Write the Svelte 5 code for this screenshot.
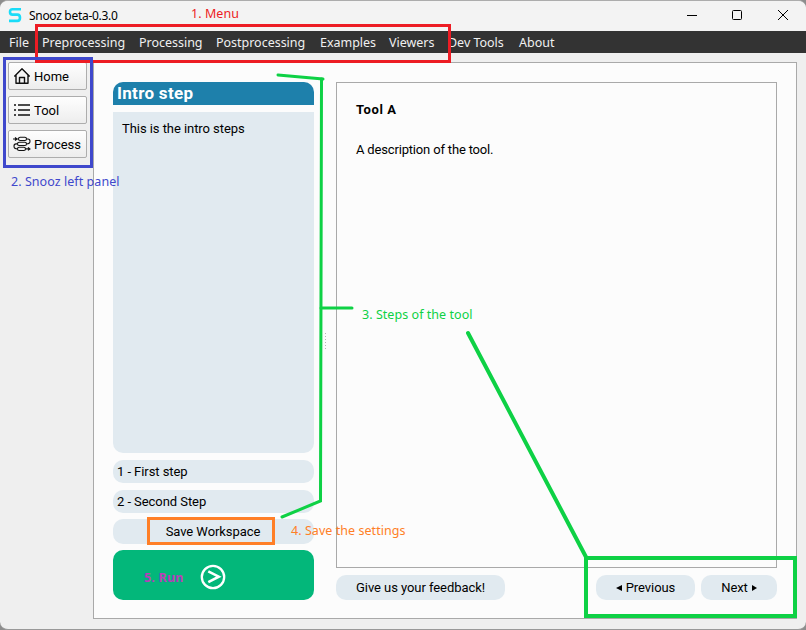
<script>
  const menus = [
    ['File', 19], ['Preprocessing', 83], ['Processing', 63], ['Postprocessing', 90],
    ['Examples', 55], ['Viewers', 45], ['Dev Tools', 57], ['About', 35]
  ];
  const steps = ['1 - First step', '2 - Second Step'];
</script>

<div class="window">
  <header class="titlebar">
    <svg class="logo" width="14" height="16" viewBox="0 0 14 16"><path d="M13 2.3H4.5Q2 2.3 2 4.9Q2 7.6 4.5 7.6H9.5Q12 7.6 12 10.8Q12 13.9 9.5 13.9H1" fill="none" stroke="#1adcf8" stroke-width="2.6" /></svg>
    <span class="title">Snooz beta-0.3.0</span>
    <svg class="controls" width="106" height="14" viewBox="0 0 106 14" fill="none" stroke="#000">
      <path d="M0 7.5H10" />
      <rect x="45.5" y="2.5" width="9" height="9" rx="1" />
      <path d="M91 2L101 12M101 2L91 12" />
    </svg>
  </header>
  <nav>
    {#each menus as [label, w]}
      <span class="menu" style="width:{w}px">{label}</span>
    {/each}
  </nav>
  <div class="body">
    <aside>
      <button>
        <svg width="18" height="18" viewBox="0 0 18 18" fill="none" stroke="#111" stroke-width="1.4" stroke-linejoin="round"><path d="M1.3 9.5L9 1.8L16.7 9.5M3 8V16.3H15V8M6.5 16V10.5H11.5V16" /></svg>
        <span>Home</span>
      </button>
      <button>
        <svg width="18" height="18" viewBox="0 0 18 18" fill="none" stroke="#111" stroke-width="1.6"><path d="M1 4H3M1 9H3M1 14H3M5 4H17M5 9H17M5 14H17" /></svg>
        <span>Tool</span>
      </button>
      <button>
        <svg width="18" height="18" viewBox="0 0 18 18" fill="none" stroke="#111" stroke-width="1.1"><rect x="5.5" y="2.3" width="8" height="3.2" rx="1.6" /><rect x="4.5" y="7.3" width="9" height="3.2" rx="1.6" /><rect x="4.5" y="12.3" width="8" height="3.2" rx="1.6" /><path d="M0 4H5.5M13.5 4H15Q17 4 17 6.2Q17 8.9 13.5 8.9M4.5 8.9H3Q1 8.9 1 11.2Q1 13.9 4.5 13.9M12.5 13.9H17M2 2.5L4 4L2 5.5M15 12.4L17 13.9L15 15.4" /></svg>
        <span>Process</span>
      </button>
    </aside>
    <main>
      <section class="steps">
        <h2>Intro step</h2>
        <div class="intro">This is the intro steps</div>
        {#each steps as step}
          <div class="step">{step}</div>
        {/each}
        <div class="save">Save Workspace</div>
        <div class="run">
          <svg width="26" height="26" viewBox="0 0 26 26" fill="none" stroke="#fff"><circle cx="13" cy="13" r="11.2" stroke-width="2.3" /><path d="M8.3 7.3L18.8 12.7L8.3 18.2" stroke-width="2.6" /></svg>
        </div>
      </section>
      <div class="splitter"><i></i></div>
      <section class="content">
        <article>
          <h3>Tool A</h3>
          <p>A description of the tool.</p>
        </article>
        <footer>
          <div class="pill feedback">Give us your feedback!</div>
          <div class="pill prev"><svg width="6" height="6" viewBox="0 0 6 6"><path d="M6 0V6L0 3Z" /></svg><span>Previous</span></div>
          <div class="pill next"><span>Next</span><svg width="5" height="6" viewBox="0 0 5 6"><path d="M0 0V6L5 3Z" /></svg></div>
        </footer>
      </section>
    </main>
  </div>

  <svg class="notes" width="806" height="630" viewBox="0 0 806 630" fill="none">
    <rect x="36.5" y="25.5" width="413" height="36" stroke="#ed1c24" stroke-width="3" />
    <rect x="4.5" y="58.5" width="87" height="108" stroke="#3f48cc" stroke-width="3" />
    <rect x="148.5" y="518.5" width="125" height="25" stroke="#ff7f27" stroke-width="3" />
    <g stroke="#0ed145" stroke-linecap="round">
      <path d="M278 75L323 79" stroke-width="3" />
      <path d="M321.5 79L320.5 501L282 517" stroke-width="3" />
      <path d="M321 308H352" stroke-width="3" />
      <path d="M468 333L586 557" stroke-width="4" />
      <rect x="586" y="558" width="209" height="58" stroke-width="4" stroke-linecap="butt" />
    </g>
    <g class="labels">
      <text x="191" y="18" fill="#ed1c24" textLength="48">1. Menu</text>
      <text x="11" y="186" fill="#3f48cc" textLength="108.5">2. Snooz left panel</text>
      <text x="362" y="319" fill="#0ed145" textLength="110.5">3. Steps of the tool</text>
      <text x="291" y="535" fill="#ff7f27" textLength="114.5">4. Save the settings</text>
      <text x="144" y="582" fill="#b83dba" font-weight="700" textLength="39.5">5. Run</text>
    </g>
  </svg>
</div>

<style>
  :global(body) { background: #8d8d8d; }
  .window {
    position: relative; box-sizing: border-box; width: 806px; height: 630px;
    display: flex; flex-direction: column; overflow: hidden;
    background: #efefef; border-top: 1px solid #acacac; border-bottom: 1px solid #999;
    border-radius: 8px; font: 13px Roboto, sans-serif; letter-spacing: -0.06px; color: #000;
  }
  .titlebar { height: 30px; flex: none; display: flex; align-items: center; background: #f3f3f3; padding-left: 8px; }
  .logo { margin-top: -2px; }
  .title { font: 12px 'Noto Sans', sans-serif; letter-spacing: -0.3px; margin-left: 7px; margin-top: -1px; white-space: nowrap; }
  .controls { margin-left: auto; margin-right: 13px; margin-top: -2px; }
  nav { height: 22px; flex: none; background: #333; display: flex; align-items: center; gap: 14px; padding-left: 9px; }
  .menu { color: #f0f0f0; font: 12.5px 'Noto Sans', sans-serif; letter-spacing: -0.02px; white-space: nowrap; flex: none; }
  .body { flex: 1; display: flex; padding: 9px 9px 10px 8px; min-height: 0; }
  aside { width: 79px; margin-right: 6px; display: flex; flex-direction: column; gap: 6px; flex: none; }
  button {
    box-sizing: border-box; height: 28px; width: 79px; padding: 0 0 0 4px; margin: 0; display: flex; align-items: center; gap: 3px;
    font: 13px Roboto, sans-serif; color: #000; border: 1px solid #adadad; border-radius: 2px;
    background: linear-gradient(#fefefe, #ededed);
  }
  main { flex: 1; box-sizing: border-box; border: 1px solid #a9a9a9; background: #fcfcfc; display: flex; padding: 19px 19px 18px; min-width: 0; }
  .steps { width: 201px; flex: none; display: flex; flex-direction: column; }
  h2 { margin: 0 0 7px; height: 23px; background: #1e80ab; color: #fff; border-radius: 10px 10px 0 0; font: 700 17px/23px Roboto, sans-serif; letter-spacing: 0.3px; padding-left: 4px; }
  .intro { box-sizing: border-box; height: 341px; background: #e1eaf0; border-radius: 0 0 10px 10px; padding: 9px; line-height: 16px; margin-bottom: 7px; }
  .step { height: 23px; line-height: 23px; background: #e1eaf0; border-radius: 10px; padding-left: 4px; margin-bottom: 7px; }
  .save { height: 25px; line-height: 26px; background: #e1eaf0; border-radius: 10px; margin: -1px 0 6px; padding-right: 1px; text-align: center; }
  .run { height: 50px; background: #03b77a; border-radius: 10px; display: flex; align-items: center; justify-content: center; }
  .run svg { margin: 3px 1px 0 0; }
  .splitter { width: 22px; flex: none; display: flex; align-items: center; justify-content: center; }
  .splitter i { width: 1px; height: 17px; background: repeating-linear-gradient(#b5b5b5 0 1px, transparent 1px 3px); }
  .content { flex: 1; display: flex; flex-direction: column; min-width: 0; }
  article { box-sizing: border-box; height: 486px; flex: none; border: 1px solid #a9a9a9; padding: 19px; }
  h3 { margin: 0; font: 700 13px/16px Roboto, sans-serif; letter-spacing: 0.6px; }
  p { margin: 24px 0 0; line-height: 16px; letter-spacing: -0.17px; }
  footer { display: flex; margin-top: 7px; }
  .pill { height: 25px; display: flex; align-items: center; justify-content: center; background: #e1eaf0; border-radius: 10px; white-space: nowrap; gap: 4px; }
  .feedback { width: 169px; margin-right: auto; }
  .prev { width: 99px; margin-right: 6px; }
  .next { width: 76px; }
  .notes { position: absolute; left: 0; top: -1px; }
  .labels { font: 12.5px 'Noto Sans', sans-serif; letter-spacing: 0; }
</style>
